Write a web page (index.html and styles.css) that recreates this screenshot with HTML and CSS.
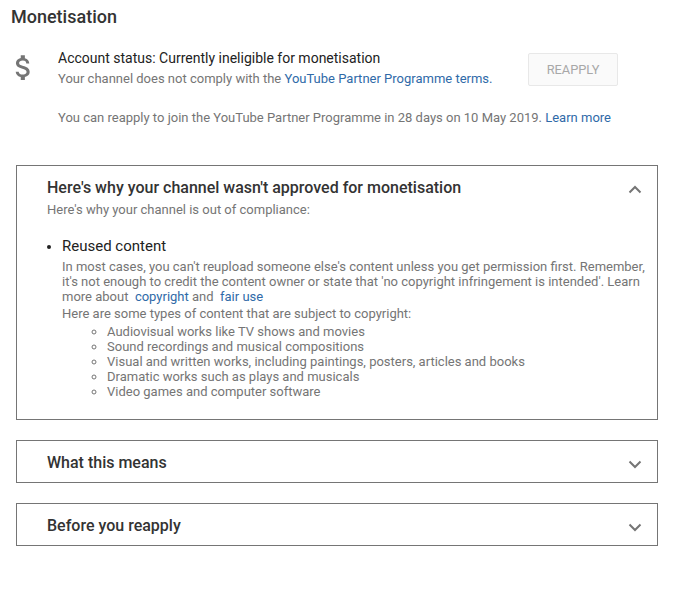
FILE: index.html
```html
<!DOCTYPE html>
<html lang="en">
<head>
    <meta charset="UTF-8">
    <title>Monetisation</title>
    <link rel="stylesheet" href="styles.css">
</head>
<body>
    <h1 class="page-title">Monetisation</h1>

    <div class="status">
        <svg class="dollar" viewBox="0 0 24 24"><path fill="#757575" d="M11.8 10.9c-2.27-.59-3-1.2-3-2.150 0-1.090 1.010-1.850 2.700-1.850 1.780 0 2.440.850 2.500 2.100h2.210c-.070-1.720-1.120-3.300-3.210-3.810V3h-3v2.160c-1.940.420-3.500 1.680-3.500 3.610 0 2.310 1.910 3.460 4.700 4.130 2.500.600 3 1.480 3 2.410 0 .690-.490 1.790-2.700 1.790-2.060 0-2.870-.920-2.980-2.100h-2.200c.120 2.190 1.760 3.420 3.680 3.830V21h3v-2.150c1.950-.370 3.500-1.500 3.500-3.550 0-2.840-2.430-3.810-4.700-4.400z"/></svg>
        <div class="status-text">
            <div class="status-title">Account status: Currently ineligible for monetisation</div>
            <div class="status-sub">Your channel does not comply with the <a href="#">YouTube Partner Programme terms.</a></div>
        </div>
        <button class="reapply" disabled>REAPPLY</button>
    </div>

    <p class="reapply-note">You can reapply to join the YouTube Partner Programme in 28 days on 10 May 2019. <a href="#">Learn more</a></p>

    <section class="panel panel-open">
        <div class="panel-head">
            <h2>Here's why your channel wasn't approved for monetisation</h2>
            <svg class="chev" width="14" height="9" viewBox="0 0 14 9"><path d="M1.500 7.500 7 2l5.500 5.500" fill="none" stroke="#757575" stroke-width="2"/></svg>
        </div>
        <div class="panel-intro">Here's why your channel is out of compliance:</div>
        <ul class="reasons">
            <li>
                <div class="reason-title">Reused content</div>
                <p class="reason-body">In most cases, you can't reupload someone else's content unless you get permission first. Remember, it's not enough to credit the content owner or state that 'no copyright infringement is intended'. Learn more about&nbsp; <a href="#">copyright</a> and&nbsp; <a href="#">fair use</a></p>
                <p class="reason-body types">Here are some types of content that are subject to copyright:</p>
                <ul class="types-list">
                    <li>Audiovisual works like TV shows and movies</li>
                    <li>Sound recordings and musical compositions</li>
                    <li>Visual and written works, including paintings, posters, articles and books</li>
                    <li>Dramatic works such as plays and musicals</li>
                    <li>Video games and computer software</li>
                </ul>
            </li>
        </ul>
    </section>

    <section class="panel">
        <div class="panel-head">
            <h2>What this means</h2>
            <svg class="chev" width="14" height="9" viewBox="0 0 14 9"><path d="M1.500 1.500 7 7l5.500-5.500" fill="none" stroke="#757575" stroke-width="2"/></svg>
        </div>
    </section>

    <section class="panel">
        <div class="panel-head">
            <h2>Before you reapply</h2>
            <svg class="chev" width="14" height="9" viewBox="0 0 14 9"><path d="M1.500 1.500 7 7l5.500-5.500" fill="none" stroke="#757575" stroke-width="2"/></svg>
        </div>
    </section>
</body>
</html>
```

FILE: styles.css
```css
body {
    margin: 0;
    padding: 0 16px;
    font-family: Roboto, Arial, sans-serif;
    font-size: 13px;
    color: #757575;
    background: #fff;
}
a {
    color: #2f6aa8;
    text-decoration: none;
}
.page-title {
    margin: 0 0 0 -5px;
    padding-top: 7px;
    font-size: 18px;
    line-height: 20px;
    font-weight: 500;
    color: #333;
}
.status {
    display: flex;
    align-items: flex-start;
    margin-top: 22px;
}
.dollar {
    flex: none;
    width: 33px;
    height: 33px;
    margin: 2px 0 0 -9px;
}
.status-text {
    margin-left: 18px;
    width: 470px;
}
.status-title {
    font-size: 14px;
    line-height: 19px;
    color: #222;
}
.status-sub {
    line-height: 21px;
}
.reapply {
    width: 90px;
    height: 33px;
    margin-top: 4px;
    border: 1px solid #e8e8e8;
    border-radius: 2px;
    background: #fafafa;
    color: #a8a8a8;
    font-family: Roboto, Arial, sans-serif;
    font-size: 12.800px;
}
.reapply-note {
    margin: 19px 0 0 42px;
    line-height: 20px;
}
.panel {
    box-sizing: border-box;
    width: 642px;
    margin-bottom: 20px;
    border: 1px solid #757575;
}
.panel-open {
    height: 255px;
    margin-top: 37px;
}
.panel-head {
    display: flex;
    align-items: center;
    justify-content: space-between;
    height: 40px;
    padding: 1px 15px 0 30px;
}
.panel-open .panel-head {
    height: 20px;
    margin-top: 11px;
    padding-top: 0;
}
.panel-head h2 {
    margin: 0;
    font-size: 16px;
    font-weight: 500;
    color: #333;
}
.chev {
    display: block;
    margin-top: 4px;
}
.panel-intro {
    margin: 4px 0 0 30px;
    line-height: 17px;
}
.reasons {
    margin: 20px 0 0;
    padding: 0 10px 0 45px;
    color: #222;
}
.reason-title {
    font-size: 15px;
    line-height: 17px;
}
.reason-body {
    margin: 0;
    padding-top: 4px;
    line-height: 15px;
    color: #757575;
}
.reason-body a {
    display: inline-block;
}
.types {
    padding-top: 2px;
}
.types-list {
    margin: 3px 0 0;
    padding-left: 45px;
    line-height: 15px;
    color: #757575;
}
```
